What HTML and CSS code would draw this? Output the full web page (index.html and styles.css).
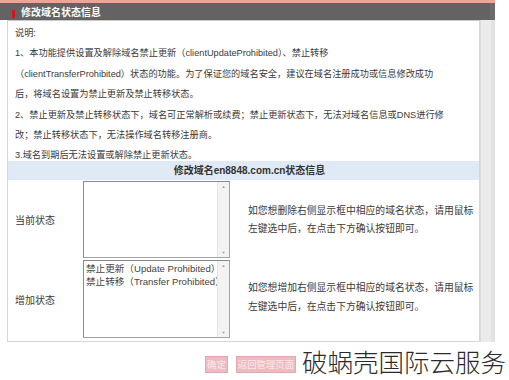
FILE: index.html
```html
<!DOCTYPE html>
<html lang="zh-CN">
<head>
<meta charset="utf-8">
<title>修改域名状态信息</title>
<link rel="stylesheet" href="styles.css">
</head>
<body>
<div class="page">
  <div class="topline"></div>
  <div class="titlebar"><span class="marker"></span><span class="title">修改域名状态信息</span></div>
  <div class="body">
    <div class="panel">
      <div class="notes">
        <p>说明:</p>
        <p>1、本功能提供设置及解除域名禁止更新（clientUpdateProhibited）、禁止转移</p>
        <p>（clientTransferProhibited）状态的功能。为了保证您的域名安全，建议在域名注册成功或信息修改成功</p>
        <p>后，将域名设置为禁止更新及禁止转移状态。</p>
        <p>2、禁止更新及禁止转移状态下，域名可正常解析或续费；禁止更新状态下，无法对域名信息或DNS进行修</p>
        <p>改；禁止转移状态下，无法操作域名转移注册商。</p>
        <p>3.域名到期后无法设置或解除禁止更新状态。</p>
      </div>
      <div class="thead">修改域名en8848.com.cn状态信息</div>
      <div class="row row1">
        <div class="label">当前状态</div>
        <div class="listcell">
          <div class="listbox">
            <div class="items"></div>
            <div class="sbar"><span class="arr">▲</span><span class="arr">▼</span></div>
          </div>
        </div>
        <div class="hint">如您想删除右侧显示框中相应的域名状态，请用鼠标<br>左键选中后，在点击下方确认按钮即可。</div>
      </div>
      <div class="row row2">
        <div class="label">增加状态</div>
        <div class="listcell">
          <div class="listbox tall">
            <div class="items">
              <div class="item">禁止更新（Update Prohibited）</div>
              <div class="item">禁止转移（Transfer Prohibited）</div>
            </div>
            <div class="sbar"><span class="arr">▲</span><span class="arr">▼</span></div>
          </div>
        </div>
        <div class="hint">如您想增加右侧显示框中相应的域名状态，请用鼠标<br>左键选中后，在点击下方确认按钮即可。</div>
      </div>
    </div>
    <div class="track"></div>
  </div>
  <div class="buttons">
    <span class="btn">确定</span>
    <span class="btn">返回管理页面</span>
  </div>
  <div class="watermark">破蜗壳国际云服务</div>
</div>
</body>
</html>
```
FILE: styles.css
```css
html, body {
  margin: 0;
  padding: 0;
  background: #fff;
}
body {
  width: 509px;
  height: 380px;
  overflow: hidden;
  font-family: "Liberation Sans", "Noto Sans CJK SC", sans-serif;
  font-size: 10px;
  color: #3a3a3a;
}
.page {
  position: relative;
  width: 509px;
  height: 380px;
}
.topline {
  width: 495px;
  height: 3px;
  background: #eca696;
}
.titlebar {
  width: 495px;
  height: 17px;
  background: #636363;
  display: flex;
  align-items: center;
  box-shadow: inset -5px 0 0 #6c6c6c;
}
.marker {
  width: 3px;
  height: 8px;
  background: #d8141a;
  margin-left: 12px;
  margin-top: 4px;
}
.title {
  color: #fff;
  font-weight: bold;
  margin-left: 6px;
  font-size: 10px;
}
.body {
  display: flex;
  width: 495px;
}
.panel {
  margin-left: 7px;
  width: 471px;
  border: 1px solid #d6d6d6;
  border-top-color: #c8c8c8;
  background: #fff;
}
.track {
  flex: 1;
  background: #ebebeb;
  border-left: 1px solid #dcdcdc;
  box-shadow: inset -4px 0 0 #e2e2e2;
}
.notes {
  padding: 2px 0 0 7px;
  margin-bottom: -5px;
  font-size: 9.2px;
}
.notes p {
  margin: 0;
  line-height: 20.4px;
  white-space: nowrap;
}
.thead {
  height: 19px;
  line-height: 19px;
  background: #dfeaf6;
  text-align: center;
  font-weight: bold;
  color: #333;
  padding-left: 12px;
}
.row {
  display: grid;
  grid-template-columns: 75px 165px 1fr;
  align-items: center;
}
.row1 {
  height: 79px;
}
.row2 {
  height: 82px;
}
.label {
  padding-left: 7px;
}
.listcell {
  display: flex;
}
.listbox {
  width: 145px;
  height: 75px;
  border: 1px solid #a4a4a4;
  border-top-color: #8a8a8a;
  border-left-color: #8a8a8a;
  display: flex;
  background: #fff;
}
.listbox.tall {
  height: 76px;
  margin-top: -2px;
}
.items {
  flex: 1;
  min-width: 0;
  overflow: hidden;
  padding-top: 1px;
  padding-left: 2px;
}
.item {
  white-space: nowrap;
  line-height: 13.5px;
  color: #444;
  font-size: 9.6px;
}
.sbar {
  width: 11px;
  background: #f3f3f3;
  border-left: 1px solid #e6e6e6;
  display: flex;
  flex-direction: column;
  justify-content: space-between;
  align-items: center;
}
.arr {
  font-size: 4px;
  color: #999;
  line-height: 9px;
}
.hint {
  line-height: 18.5px;
  white-space: nowrap;
  font-size: 9.8px;
  margin-top: 2px;
}
.row2 .hint {
  margin-top: -4px;
}
.buttons {
  display: flex;
  gap: 8px;
  padding-left: 205px;
  margin-top: 14px;
}
.btn {
  display: inline-block;
  height: 15px;
  line-height: 15px;
  padding: 0 1px;
  background: #edbcc2;
  border: 1px solid #e3a9b0;
  color: #fbe9ec;
  font-size: 9.4px;
}
.watermark {
  position: absolute;
  left: 302px;
  top: 344px;
  font-family: "Noto Sans CJK SC", sans-serif;
  font-weight: 300;
  font-size: 25.5px;
  line-height: 34px;
  color: #2a2a2a;
  white-space: nowrap;
}
```
